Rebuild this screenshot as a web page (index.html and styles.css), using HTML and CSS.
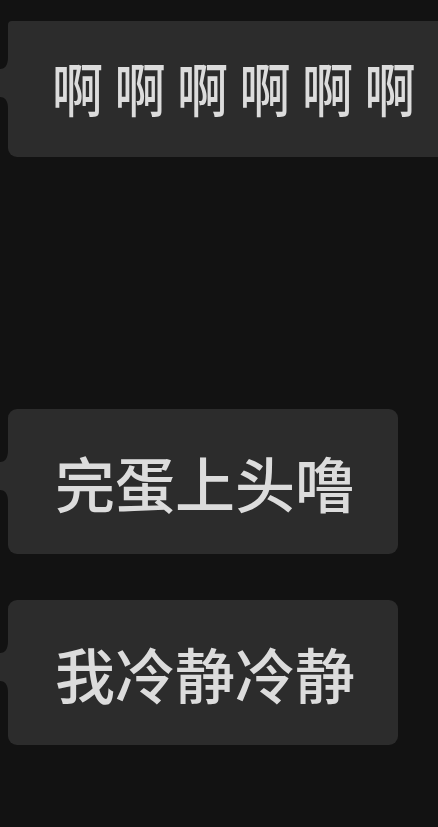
FILE: index.html
```html
<!DOCTYPE html>
<html lang="zh">
<head>
<meta charset="utf-8">
<link rel="stylesheet" href="styles.css">
</head>
<body>
<div class="chat">
  <div class="row row-first">
    <svg class="tail" width="8" height="52" viewBox="0 0 8 52"><path d="M8 0 Q8 12 0 12 L0 40 Q8 40 8 52 Z" fill="#2c2c2c"/></svg>
    <div class="bubble bubble-wide"><span class="narrow">啊啊啊啊啊啊</span></div>
  </div>
  <div class="row row-second">
    <svg class="tail" width="8" height="52" viewBox="0 0 8 52"><path d="M8 0 Q8 12 0 12 L0 40 Q8 40 8 52 Z" fill="#2c2c2c"/></svg>
    <div class="bubble">完蛋上头噜</div>
  </div>
  <div class="row row-third">
    <svg class="tail" width="8" height="52" viewBox="0 0 8 52"><path d="M8 0 Q8 12 0 12 L0 40 Q8 40 8 52 Z" fill="#2c2c2c"/></svg>
    <div class="bubble">我冷静冷静</div>
  </div>
</div>
</body>
</html>
```
FILE: styles.css
```css
html, body {
  margin: 0;
  padding: 0;
  background: #121212;
  overflow: hidden;
  width: 438px;
  height: 827px;
}
.chat {
  display: flex;
  flex-direction: column;
  font-family: "Noto Sans CJK SC", "Noto Sans", sans-serif;
  font-weight: 500;
  color: #dcdcdc;
}
.row {
  display: flex;
  align-items: center;
}
.row-first { margin-top: 21px; }
.row-second { margin-top: 252px; }
.row-third { margin-top: 46px; }
.tail {
  flex: none;
  display: block;
  margin-bottom: 12px;
}
.bubble {
  flex: none;
  box-sizing: border-box;
  width: 390px;
  height: 145px;
  padding-left: 47px;
  background: #2c2c2c;
  border-radius: 9px;
  display: flex;
  align-items: center;
  font-size: 60px;
  line-height: 1;
  white-space: nowrap;
  overflow: hidden;
}
.bubble-wide {
  width: 430px;
  height: 136px;
  border-radius: 4px 0 0 9px;
}
.narrow {
  display: inline-block;
  font-size: 58px;
  letter-spacing: 13px;
  transform: scaleX(0.88);
  transform-origin: left center;
  margin-left: -3px;
  margin-top: -4px;
}
```
